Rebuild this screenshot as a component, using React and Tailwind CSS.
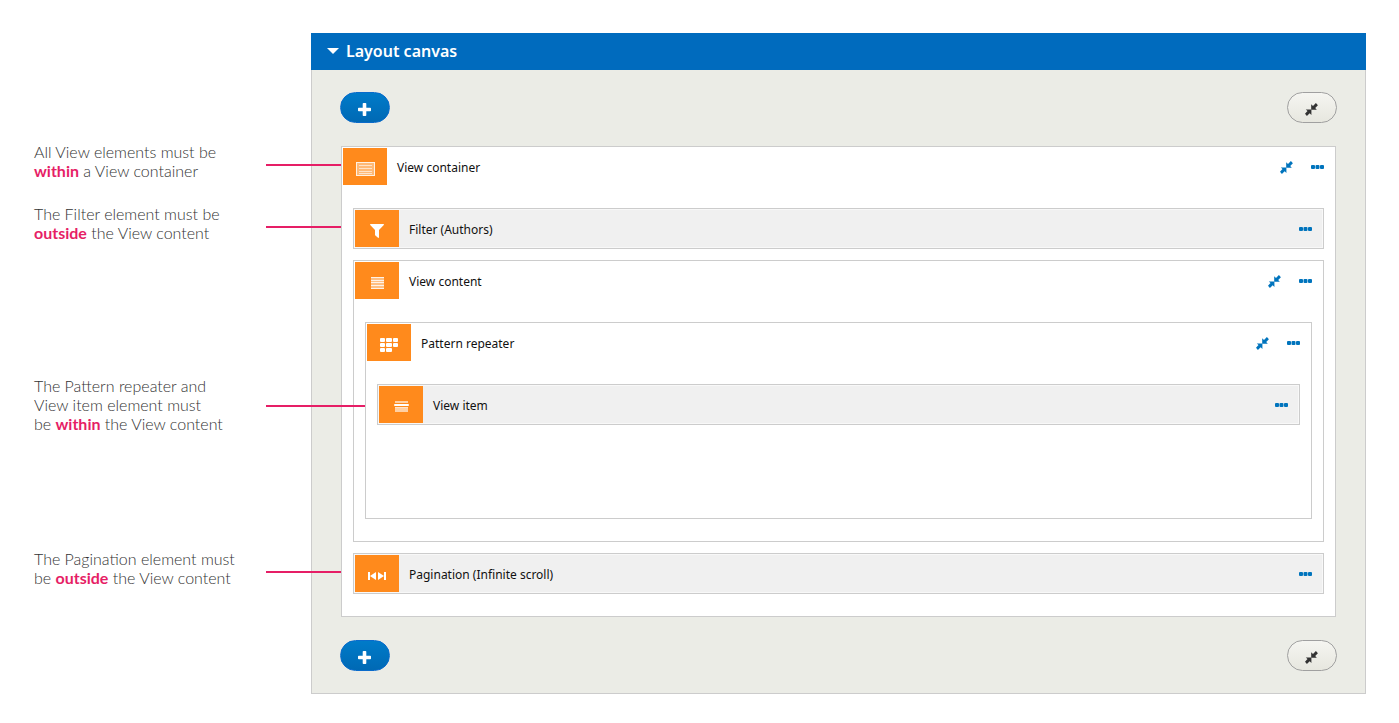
import React, { useState } from 'react';

const notes = [
  { id: 'container', space: 'mt-0', line: 'mt-[22px] w-[75px]', body: <>All View elements must be<br /><Mark>within</Mark> a View container</> },
  { id: 'filter', space: 'mt-6', line: 'mt-[22px] w-[75px]', body: <>The Filter element must be<br /><Mark>outside</Mark> the View content</> },
  { id: 'repeater', space: 'mt-[134px]', line: 'mt-[29px] w-[99px]', body: <>The Pattern repeater and<br />View item element must<br />be <Mark>within</Mark> the View content</> },
  { id: 'pagination', space: 'mt-[116px]', line: 'mt-[22px] w-[75px]', body: <>The Pagination element must<br />be <Mark>outside</Mark> the View content</> },
];

function Mark({ children }) {
  return <strong className="font-bold text-[#e61e66]">{children}</strong>;
}

const ContainerIcon = () => (
  <svg width="19" height="14" viewBox="0 0 19 14" fill="#fff">
    <path fillOpacity="0.4" d="M0 0h19v14H0z" />
    <path d="M0 0h19v14H0zM1 1v12h17V1z" fillRule="evenodd" fillOpacity="0.8" />
    <path d="M3 3h13v1H3zM3 6h13v1H3zM3 9h13v1H3zM3 11h13v1H3z" fillOpacity="0.6" />
  </svg>
);

const FilterIcon = () => (
  <svg width="14" height="14" viewBox="0 0 14 14" fill="#fff">
    <path d="M.6 0h12.8c.6 0 .7.6.4 1L9 6v7.3c0 .6-.5.8-1 .5L5.4 11.600c-.3-.2-.4-.4-.4-.8V6L.2 1C-.1.600 0 0 .6 0z" />
  </svg>
);

const ContentIcon = () => (
  <svg width="13" height="12" viewBox="0 0 13 12" fill="#fff">
    <path fillOpacity="0.45" d="M0 0h13v12H0z" />
    <path d="M0 0h13v1H0zM0 3h13v1H0zM0 5h13v1H0zM0 8h13v1H0zM0 11h13v1H0z" fillOpacity="0.8" />
  </svg>
);

const RepeaterIcon = () => (
  <svg width="18" height="14" viewBox="0 0 18 14" fill="#fff">
    <rect x="0" y="0" width="5" height="4" rx="1" />
    <rect x="6" y="0" width="6" height="4" rx="1" />
    <rect x="13" y="0" width="5" height="4" rx="1" />
    <rect x="0" y="5" width="5" height="4" rx="1" />
    <rect x="6" y="5" width="6" height="4" rx="1" />
    <rect x="13" y="5" width="5" height="4" rx="1" />
    <rect x="0" y="10" width="5" height="4" rx="1" />
    <rect x="6" y="10" width="6" height="4" rx="1" />
  </svg>
);

const ItemIcon = () => (
  <svg width="15" height="11" viewBox="0 0 15 11" fill="#fff">
    <path d="M1 0h13v2H1zM1 6h13v5H1z" fillOpacity="0.6" />
    <rect y="3" width="15" height="2" rx="1" />
    <path d="M1 6h13v1H1z" fillOpacity="0.4" />
  </svg>
);

const PaginationIcon = () => (
  <svg width="18" height="8" viewBox="0 0 18 8" fill="#fff">
    <path d="M0 0h2v8H0zM8 0v8L2 4zM10 0v8l6-4zM16 0h2v8h-2z" />
  </svg>
);

const CollapseIcon = () => (
  <svg width="13" height="13" viewBox="0 0 13 13" fill="currentColor">
    <path d="M6.200 1.200v5.600h5.600L10.200 5l2.700-2.700L10.900.1 8 2.900z" />
    <path d="M6.400 12v-5.600H.8L2.500 8.100 0 10.800 1.900 13l2.800-2.800z" />
  </svg>
);

const DotsIcon = () => (
  <svg width="13" height="4" viewBox="0 0 13 4" fill="currentColor">
    <rect width="4" height="4" rx="1" />
    <rect x="4.500" width="4" height="4" rx="1" />
    <rect x="9" width="4" height="4" rx="1" />
  </svg>
);

const PlusIcon = () => (
  <svg width="13" height="13" viewBox="0 0 13 13" fill="#fff">
    <path d="M5.500 0h2q.8 0 .8.800v3.900h3.900q.8 0 .8.800v2q0 .8-.8.800H8.300v3.900q0 .8-.8.800h-2q-.8 0-.8-.8V8.300H.8Q0 8.300 0 7.500v-2q0-.8.800-.8h3.900V.8q0-.8.800-.8z" />
  </svg>
);

const Element = ({ icon, label, leaf, children }) => {
  const [open, setOpen] = useState(true);

  return (
    <section className={leaf ? 'border border-[#cccccc] bg-[#f0f0f0]' : 'border border-[#cccccc] bg-white'}>
      <div className={leaf ? 'flex items-center border border-[#f8f8f8] pr-[10px]' : 'flex items-center p-px pr-[11px]'}>
        <span className="flex h-[37px] w-11 shrink-0 items-center justify-center bg-[#ff8a1c] pt-1">{icon}</span>
        <h3 className="ml-[10px] flex-1 pt-[2px] text-xs text-[#111111]">{label}</h3>
        {!leaf && (
          <button type="button" aria-label={`Collapse ${label}`} aria-expanded={open} onClick={() => setOpen(!open)} className="mr-[18px] pt-[2px] text-[#0074bd]">
            <CollapseIcon />
          </button>
        )}
        <button type="button" aria-label={`${label} options`} className="text-[#0074bd]">
          <DotsIcon />
        </button>
      </div>
      {!leaf && open && <div className="flex flex-col gap-[11px] px-[11px] pt-[22px] pb-[22px]">{children}</div>}
    </section>
  );
};

const Toolbar = ({ onToggle }) => (
  <div className="flex items-center justify-between">
    <button type="button" aria-label="Add element" className="flex h-[31px] w-[50px] items-center justify-center rounded-full border border-[#0a6bcb] bg-linear-to-b from-[#007bc9] to-[#0069b4] pt-[3px] pr-[2px]">
      <PlusIcon />
    </button>
    <button type="button" aria-label="Collapse all" onClick={onToggle} className="flex h-[31px] w-[50px] items-center justify-center rounded-full border border-[#a0a0a0] bg-linear-to-b from-[#f5f5f1] to-[#e7e7df] pt-[3px] pr-[2px] text-[#333333]">
      <CollapseIcon />
    </button>
  </div>
);

const App = () => {
  const [open, setOpen] = useState(true);
  const [expanded, setExpanded] = useState(true);
  const toggleAll = () => setExpanded(!expanded);

  return (
    <div className="flex min-h-screen items-start bg-white">
      <aside className="relative z-10 w-[311px] shrink-0 pt-[142px] pl-[34px] font-['Lato',sans-serif] text-base leading-[19px] font-light text-[#333333]">
        {notes.map((note) => (
          <div key={note.id} className={`flex items-start ${note.space}`}>
            <p className="w-[232px] shrink-0 whitespace-nowrap">{note.body}</p>
            {/* connector runs over the canvas edge */}
            <span className={`h-[2px] shrink-0 bg-[#e61e66] ${note.line}`} />
          </div>
        ))}
      </aside>

      <main className="mt-[33px] mr-[33px] mb-7 min-w-0 flex-1 font-['Noto_Sans',sans-serif]">
        <h2>
          <button type="button" aria-expanded={open} onClick={() => setOpen(!open)} className="flex h-[37px] w-full items-center gap-[7px] bg-[#006bbe] px-4 pb-[2px] text-base font-semibold text-white">
            <svg width="12" height="6" viewBox="0 0 12 6" fill="#fff"><path d="M0 0h12L6 6z" /></svg>
            Layout canvas
          </button>
        </h2>
        {open && (
          <div className="flex flex-col gap-[23px] border border-t-0 border-[#cccccc] bg-[#ebece6] px-7 py-[22px]">
            <Toolbar onToggle={toggleAll} />
            <div className="mx-px">
              <Element icon={<ContainerIcon />} label="View container">
                {expanded && (
                  <>
                    <Element leaf icon={<FilterIcon />} label="Filter (Authors)" />
                    <Element icon={<ContentIcon />} label="View content">
                      <Element icon={<RepeaterIcon />} label="Pattern repeater">
                        <div className="min-h-28">
                          <Element leaf icon={<ItemIcon />} label="View item" />
                        </div>
                      </Element>
                    </Element>
                    <Element leaf icon={<PaginationIcon />} label="Pagination (Infinite scroll)" />
                  </>
                )}
              </Element>
            </div>
            <Toolbar onToggle={toggleAll} />
          </div>
        )}
      </main>
    </div>
  );
};

export default App;
